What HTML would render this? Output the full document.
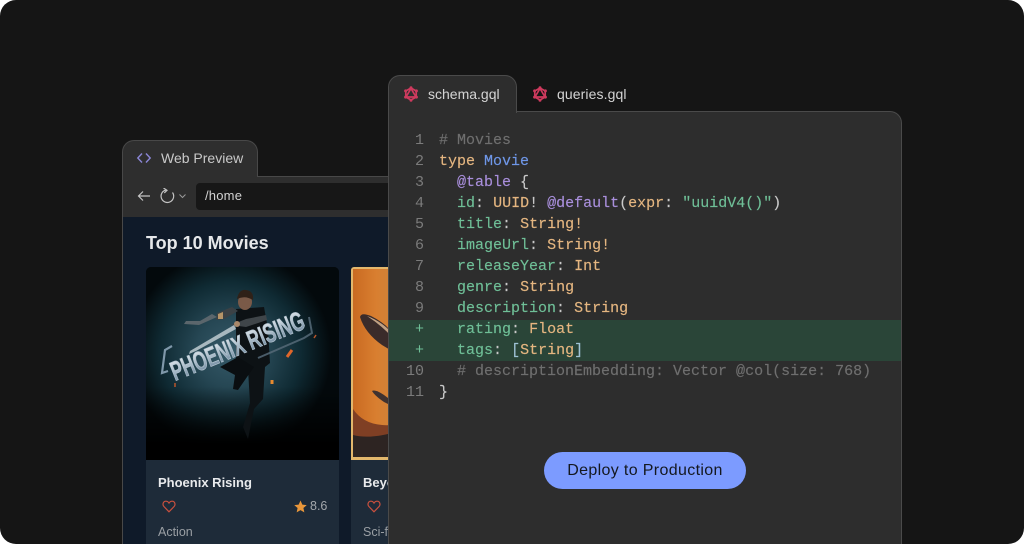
<!DOCTYPE html>
<html><head><meta charset="utf-8">
<style>
*{margin:0;padding:0;box-sizing:border-box}
html,body{width:1024px;height:544px;overflow:hidden;background:#fff}
body{font-family:"Liberation Sans",sans-serif;position:relative}
.abs{position:absolute}
#bg{left:0;top:0;width:1024px;height:544px;background:#151515;border-radius:16px}
.code{position:absolute;font:15px/21px "Liberation Mono",monospace;white-space:pre;left:439px;color:#e3e3e3;-webkit-text-stroke:.15px currentColor}
.ln{position:absolute;font:15px/21px "Liberation Mono",monospace;color:#7b7b7b;width:36px;text-align:right;left:388px}
.g{color:#6fbf97}.o{color:#e5b680}.p{color:#a98fdc}.b{color:#6f97e8}.c{color:#6f6f6f}.w{color:#c9c9c9}.k{color:#9fc2d6}
</style></head><body>
<div class="abs" id="bg"></div>

<!-- Web preview -->
<div class="abs" style="left:122px;top:140px;width:136px;height:37px;background:#2e2e2e;border:1px solid #484848;border-bottom:none;border-radius:12px 12px 0 0;z-index:2"></div>
<div class="abs" style="left:122px;top:176px;width:270px;height:41px;background:#2e2e2e;border-top:1px solid #484848;border-left:1px solid #484848"></div>
<div class="abs" style="left:123px;top:176px;width:134px;height:3px;background:#2e2e2e;z-index:3"></div>
<svg class="abs" style="left:136px;top:151px;z-index:4" width="16" height="14" viewBox="0 0 16 14" fill="none" stroke="#8b86d6" stroke-width="1.4"><path d="M6 2.500 1.800 7 6 11.500M10 2.500 14.200 7 10 11.500"/></svg>
<div class="abs" style="left:161px;top:150px;font-size:14px;line-height:16px;color:#c9c9c9;z-index:4">Web Preview</div>
<svg class="abs" style="left:136px;top:188px" width="56" height="18" viewBox="0 0 56 18" fill="none" stroke="#c4c4c4" stroke-width="1.2"><path d="M14 8H2.500M7 3.500 2.500 8 7 12.500"/><path d="M36.500 4.500A6.300 6.300 0 1 1 30 2"/><path d="M27.500 0 31 2.300 28.300 5"/><path d="M43.500 6.500 46.500 9.500 49.500 6.500" stroke="#999" stroke-width="1"/></svg>
<div class="abs" style="left:196px;top:183px;width:196px;height:27px;background:#171717;border-radius:4px 0 0 4px"></div>
<div class="abs" style="left:205px;top:188px;font-size:13px;line-height:16px;color:#d2d2d2;letter-spacing:.2px">/home</div>
<div class="abs" style="left:122px;top:217px;width:270px;height:327px;background:#0f1a29;border-left:1px solid #484848"></div>
<div class="abs" style="left:146px;top:232px;font-size:18px;line-height:22px;font-weight:700;color:#e6e8ea">Top 10 Movies</div>

<!-- Card 1 -->
<div class="abs" style="left:146px;top:460px;width:193px;height:84px;background:#1e2b39"></div>
<svg class="abs" style="left:146px;top:267px" width="193" height="193" viewBox="0 0 193 193">
<defs>
<radialGradient id="gl" cx="0.44" cy="0.44" r="0.52"><stop offset="0" stop-color="#365a69"/><stop offset=".35" stop-color="#264754"/><stop offset=".7" stop-color="#0f2a33"/><stop offset="1" stop-color="#03090c"/></radialGradient>
<linearGradient id="fade" x1="0" y1="0" x2="0" y2="1"><stop offset=".62" stop-color="#000" stop-opacity="0"/><stop offset=".92" stop-color="#000"/></linearGradient>
<linearGradient id="tx" x1="0" y1="0" x2="0" y2="1"><stop offset="0" stop-color="#eef3f6"/><stop offset=".5" stop-color="#a8bac8"/><stop offset="1" stop-color="#5f7c94"/></linearGradient>
<clipPath id="rc"><path d="M5 0H188a5 5 0 0 1 5 5V193H0V5a5 5 0 0 1 5-5z"/></clipPath>
</defs>
<g clip-path="url(#rc)">
<rect width="193" height="193" fill="#03090c"/>
<rect width="193" height="193" fill="url(#gl)"/>
<rect width="193" height="193" fill="url(#fade)"/>
<!-- legs & body -->
<path d="M90 42 118 40 122 62 124 96 119 100 117 132 108 142 102 172 97 160 104 136 102 102 90 92Z" fill="#0d1215"/>
<path d="M74 100 92 90 108 100 101 110 92 123 87 122 89 108Z" fill="#0a0e11"/>
<!-- head -->
<ellipse cx="99" cy="35" rx="7" ry="8" fill="#7a5a48"/>
<path d="M91 32Q93 22 100 23 108 24 107 33 99 28 91 32Z" fill="#2f2118"/>
<!-- arms -->
<path d="M71 46 86 40 92 44 78 52 70 53Z" fill="#3b4145"/>
<path d="M85 58 100 52 120 48 121 53 100 60Z" fill="#3f4549"/>
<path d="M72 47 77 45 77 52 72 52Z" fill="#b59468"/>
<circle cx="91" cy="57" r="3" fill="#a9886a"/>
<path d="M71 50 53 58 38 57 40 54 54 54 66 47Z" fill="#5b666c"/>
<!-- sword -->
<path d="M88 58 44 84 43 87 50 84 90 62Z" fill="#a8b8bf"/>
<!-- logo -->
<text transform="translate(29 114) rotate(-22)" font-family="Liberation Sans,sans-serif" font-weight="700" font-size="27" textLength="142" lengthAdjust="spacingAndGlyphs" fill="url(#tx)" stroke="#b4c4d0" stroke-width=".7">PHOENIX RISING</text>
<path d="M26 79 19 83 16 106 22 104" fill="none" stroke="#7f98aa" stroke-width="2.200"/>
<path d="M163 50 166 66 158 71 112 91" fill="none" stroke="#566a78" stroke-width="2" opacity=".85"/>
<path d="M146 83 141 90" stroke="#e0662a" stroke-width="3"/>
<path d="M126 117 126 113" stroke="#e88a2e" stroke-width="3"/>
<path d="M29 120 29 116" stroke="#b9552a" stroke-width="1.500"/>
<path d="M170 68 168 71" stroke="#b9552a" stroke-width="1.500"/>
</g>
</svg>
<div class="abs" style="left:158px;top:475px;font-size:13px;line-height:16px;font-weight:700;color:#e8eaec">Phoenix Rising</div>
<svg class="abs" style="left:162px;top:500px" width="14" height="13" viewBox="0 0 14 13" fill="none" stroke="#c9503e" stroke-width="1.200"><path d="M7 11.800 1.800 6.400C.2 4.500 1.200 1.200 3.900 1.200 5.300 1.200 6.300 2 7 3.100 7.700 2 8.700 1.200 10.100 1.200 12.800 1.200 13.800 4.500 12.200 6.400Z"/></svg>
<svg class="abs" style="left:294px;top:500px" width="13" height="13" viewBox="0 0 24 24"><path d="M12 1 15.400 8.500 23.500 9.400 17.400 14.800 19.100 22.800 12 18.700 4.900 22.800 6.600 14.800.5 9.400 8.600 8.500Z" fill="#e8963a"/></svg>
<div class="abs" style="left:310px;top:499px;font-size:12.500px;line-height:15px;color:#a3a7ab">8.6</div>
<div class="abs" style="left:158px;top:525px;font-size:12.500px;line-height:15px;color:#9a9fa4">Action</div>

<!-- Card 2 -->
<div class="abs" style="left:351px;top:460px;width:41px;height:84px;background:#1e2b39"></div>
<svg class="abs" style="left:351px;top:267px" width="41" height="193" viewBox="0 0 41 193">
<defs><linearGradient id="sun" x1="0" y1="0" x2="1" y2="0"><stop offset="0" stop-color="#c96a22"/><stop offset=".6" stop-color="#d97f30"/><stop offset="1" stop-color="#d08238"/></linearGradient></defs>
<path d="M3 0H41V193H0V3a3 3 0 0 1 3-3z" fill="#e3b76c"/>
<rect x="2" y="2" width="39" height="188" fill="url(#sun)"/>
<path d="M2 142Q14 160 41 158V190H2Z" fill="#7f3f24"/>
<path d="M2 168Q18 172 41 166V190H2Z" fill="#2d2422"/>
<path d="M9 50Q10 45 20 49 32 55 38 62L41 65V84L31 78Q14 66 9 50Z" fill="#3a2b2a"/>
<path d="M16 49Q30 54 41 66V70Q30 58 16 49Z" fill="#c0a184"/>
<path d="M21 124Q24 122 33 128L41 134V139L33 135Q24 129 21 124Z" fill="#3f3230"/>
</svg>
<div class="abs" style="left:363px;top:475px;font-size:13px;line-height:16px;font-weight:700;color:#e8eaec">Beyond</div>
<svg class="abs" style="left:367px;top:500px" width="14" height="13" viewBox="0 0 14 13" fill="none" stroke="#c9503e" stroke-width="1.200"><path d="M7 11.800 1.800 6.400C.2 4.500 1.200 1.200 3.900 1.200 5.300 1.200 6.300 2 7 3.100 7.700 2 8.700 1.200 10.100 1.200 12.800 1.200 13.800 4.500 12.200 6.400Z"/></svg>
<div class="abs" style="left:363px;top:525px;font-size:12.500px;line-height:15px;color:#9a9fa4">Sci-fi</div>

<!-- Editor -->
<div class="abs" style="left:388px;top:111px;width:514px;height:433px;background:#2d2d2d;border:1px solid #4a4a4a;border-bottom:none;border-radius:0 12px 0 0"></div>
<div class="abs" style="left:388px;top:75px;width:129px;height:38px;background:#2d2d2d;border:1px solid #4a4a4a;border-bottom:none;border-radius:12px 12px 0 0"></div>
<svg class="abs" style="left:403px;top:86px" width="16" height="16" viewBox="0 0 16 16" fill="none" stroke="#cf3a5e" stroke-width="1.700"><path d="M8 2 13.200 5V11L8 14 2.800 11V5Z"/><path d="M8 2.500 13 11H3Z"/><g fill="#cf3a5e" stroke="none"><circle cx="8" cy="1.800" r="1.500"/><circle cx="13.400" cy="4.900" r="1.500"/><circle cx="13.400" cy="11.100" r="1.500"/><circle cx="8" cy="14.200" r="1.500"/><circle cx="2.600" cy="11.100" r="1.500"/><circle cx="2.600" cy="4.900" r="1.500"/></g></svg>
<div class="abs" style="left:428px;top:85px;font-size:14px;line-height:18px;color:#d4d4d4">schema.gql</div>
<svg class="abs" style="left:532px;top:86px" width="16" height="16" viewBox="0 0 16 16" fill="none" stroke="#cf3a5e" stroke-width="1.700"><path d="M8 2 13.200 5V11L8 14 2.800 11V5Z"/><path d="M8 2.500 13 11H3Z"/><g fill="#cf3a5e" stroke="none"><circle cx="8" cy="1.800" r="1.500"/><circle cx="13.400" cy="4.900" r="1.500"/><circle cx="13.400" cy="11.100" r="1.500"/><circle cx="8" cy="14.200" r="1.500"/><circle cx="2.600" cy="11.100" r="1.500"/><circle cx="2.600" cy="4.900" r="1.500"/></g></svg>
<div class="abs" style="left:557px;top:85px;font-size:14px;line-height:18px;color:#d4d4d4;letter-spacing:.1px">queries.gql</div>

<div class="abs" style="left:389px;top:320px;width:512px;height:41px;background:#2a4538"></div>

<div class="ln" style="top:130px">1</div><div class="code" style="top:130px"><span class="c"># Movies</span></div>
<div class="ln" style="top:151px">2</div><div class="code" style="top:151px"><span class="o">type</span> <span class="b">Movie</span></div>
<div class="ln" style="top:172px">3</div><div class="code" style="top:172px">  <span class="p">@table</span> <span class="w">{</span></div>
<div class="ln" style="top:193px">4</div><div class="code" style="top:193px">  <span class="g">id</span><span class="w">:</span> <span class="o">UUID</span><span class="w">!</span> <span class="p">@default</span><span class="w">(</span><span class="o">expr</span><span class="w">:</span> <span class="g">"uuidV4()"</span><span class="w">)</span></div>
<div class="ln" style="top:214px">5</div><div class="code" style="top:214px">  <span class="g">title</span><span class="w">:</span> <span class="o">String!</span></div>
<div class="ln" style="top:235px">6</div><div class="code" style="top:235px">  <span class="g">imageUrl</span><span class="w">:</span> <span class="o">String!</span></div>
<div class="ln" style="top:256px">7</div><div class="code" style="top:256px">  <span class="g">releaseYear</span><span class="w">:</span> <span class="o">Int</span></div>
<div class="ln" style="top:277px">8</div><div class="code" style="top:277px">  <span class="g">genre</span><span class="w">:</span> <span class="o">String</span></div>
<div class="ln" style="top:298px">9</div><div class="code" style="top:298px">  <span class="g">description</span><span class="w">:</span> <span class="o">String</span></div>
<div class="ln" style="top:319px;color:#6fbf97">+</div><div class="code" style="top:319px">  <span class="g">rating</span><span class="w">:</span> <span class="o">Float</span></div>
<div class="ln" style="top:340px;color:#6fbf97">+</div><div class="code" style="top:340px">  <span class="g">tags</span><span class="w">:</span> <span class="k">[</span><span class="o">String</span><span class="k">]</span></div>
<div class="ln" style="top:361px">10</div><div class="code" style="top:361px">  <span class="c"># descriptionEmbedding: Vector @col(size: 768)</span></div>
<div class="ln" style="top:382px">11</div><div class="code" style="top:382px"><span class="w">}</span></div>

<div class="abs" style="left:544px;top:452px;width:202px;height:37px;border-radius:19px;background:#7c9bff;color:#14181f;font-size:16px;line-height:37px;text-align:center;letter-spacing:.35px">Deploy to Production</div>
</body></html>
